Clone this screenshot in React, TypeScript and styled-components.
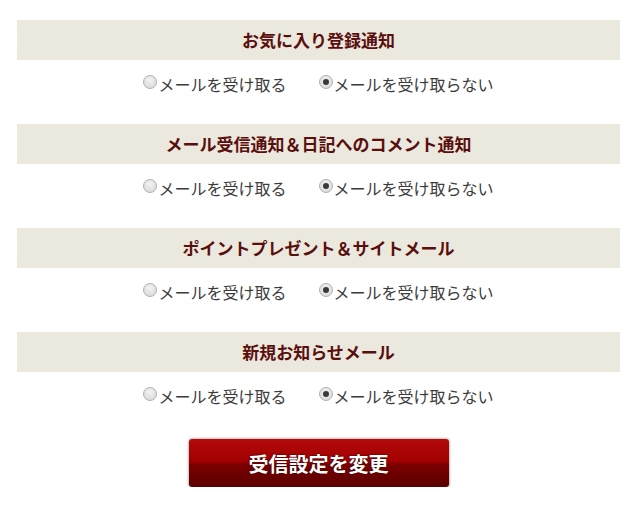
import React from "react"
import styled, { createGlobalStyle } from "styled-components"

const GlobalStyle = createGlobalStyle`
    body {
        margin: 0;
        background: #fff;
        font-family: "Noto Sans CJK JP", "Noto Sans", sans-serif;
    }
`

const Wrapper = styled.div`
    width: 603px;
    padding: 20px 0 0 17px;
`

const Heading = styled.h3`
    margin: 0;
    height: 40px;
    line-height: 40px;
    background-color: #ebe8dd;
    text-align: center;
    font-size: 17px;
    font-weight: bold;
    color: #5a0f0f;
`

const Options = styled.div`
    height: 64px;
    display: flex;
    justify-content: center;
    align-items: flex-start;
    gap: 32px;
    padding-top: 12px;
    box-sizing: border-box;
`

const Label = styled.label`
    display: flex;
    align-items: center;
    height: 24px;
    font-size: 16px;
    color: #3c3c3c;
    cursor: pointer;
`

const Radio = styled.span<{ checked?: boolean }>`
    position: relative;
    flex-shrink: 0;
    width: 14px;
    height: 14px;
    margin: 0 1px 4px 0;
    border-radius: 50%;
    border: 1px solid #b0b0b0;
    background: radial-gradient(circle at 50% 35%, #f2f2f2 0%, #d6d6d6 100%);
    box-sizing: border-box;

    &::after {
        content: "";
        display: ${p => (p.checked ? "block" : "none")};
        position: absolute;
        left: 3px;
        top: 3px;
        width: 6px;
        height: 6px;
        border-radius: 50%;
        background: #3a3a3a;
    }
`

const ButtonRow = styled.div`
    display: flex;
    justify-content: center;
    padding-top: 3px;
`

const Button = styled.button`
    width: 260px;
    height: 48px;
    border: none;
    border-radius: 3px;
    background: linear-gradient(#b40a0a 0%, #a10000 48%, #7c0000 52%, #5a0000 100%);
    box-shadow: 0 0 3px rgba(0, 0, 0, 0.55);
    color: #fff;
    font-family: "Noto Sans CJK JP", sans-serif;
    font-size: 20px;
    font-weight: bold;
    text-shadow: 0 0 2px #3a0000, 0 0 1px #3a0000;
    cursor: pointer;
`

const sections = [
    "お気に入り登録通知",
    "メール受信通知＆日記へのコメント通知",
    "ポイントプレゼント＆サイトメール",
    "新規お知らせメール",
]

const App = () => {
    return (
        <>
            <GlobalStyle />
            <Wrapper>
                {sections.map(title => (
                    <section key={title}>
                        <Heading>{title}</Heading>
                        <Options>
                            <Label>
                                <Radio />
                                メールを受け取る
                            </Label>
                            <Label>
                                <Radio checked />
                                メールを受け取らない
                            </Label>
                        </Options>
                    </section>
                ))}
                <ButtonRow>
                    <Button>受信設定を変更</Button>
                </ButtonRow>
            </Wrapper>
        </>
    )
}

export default App
